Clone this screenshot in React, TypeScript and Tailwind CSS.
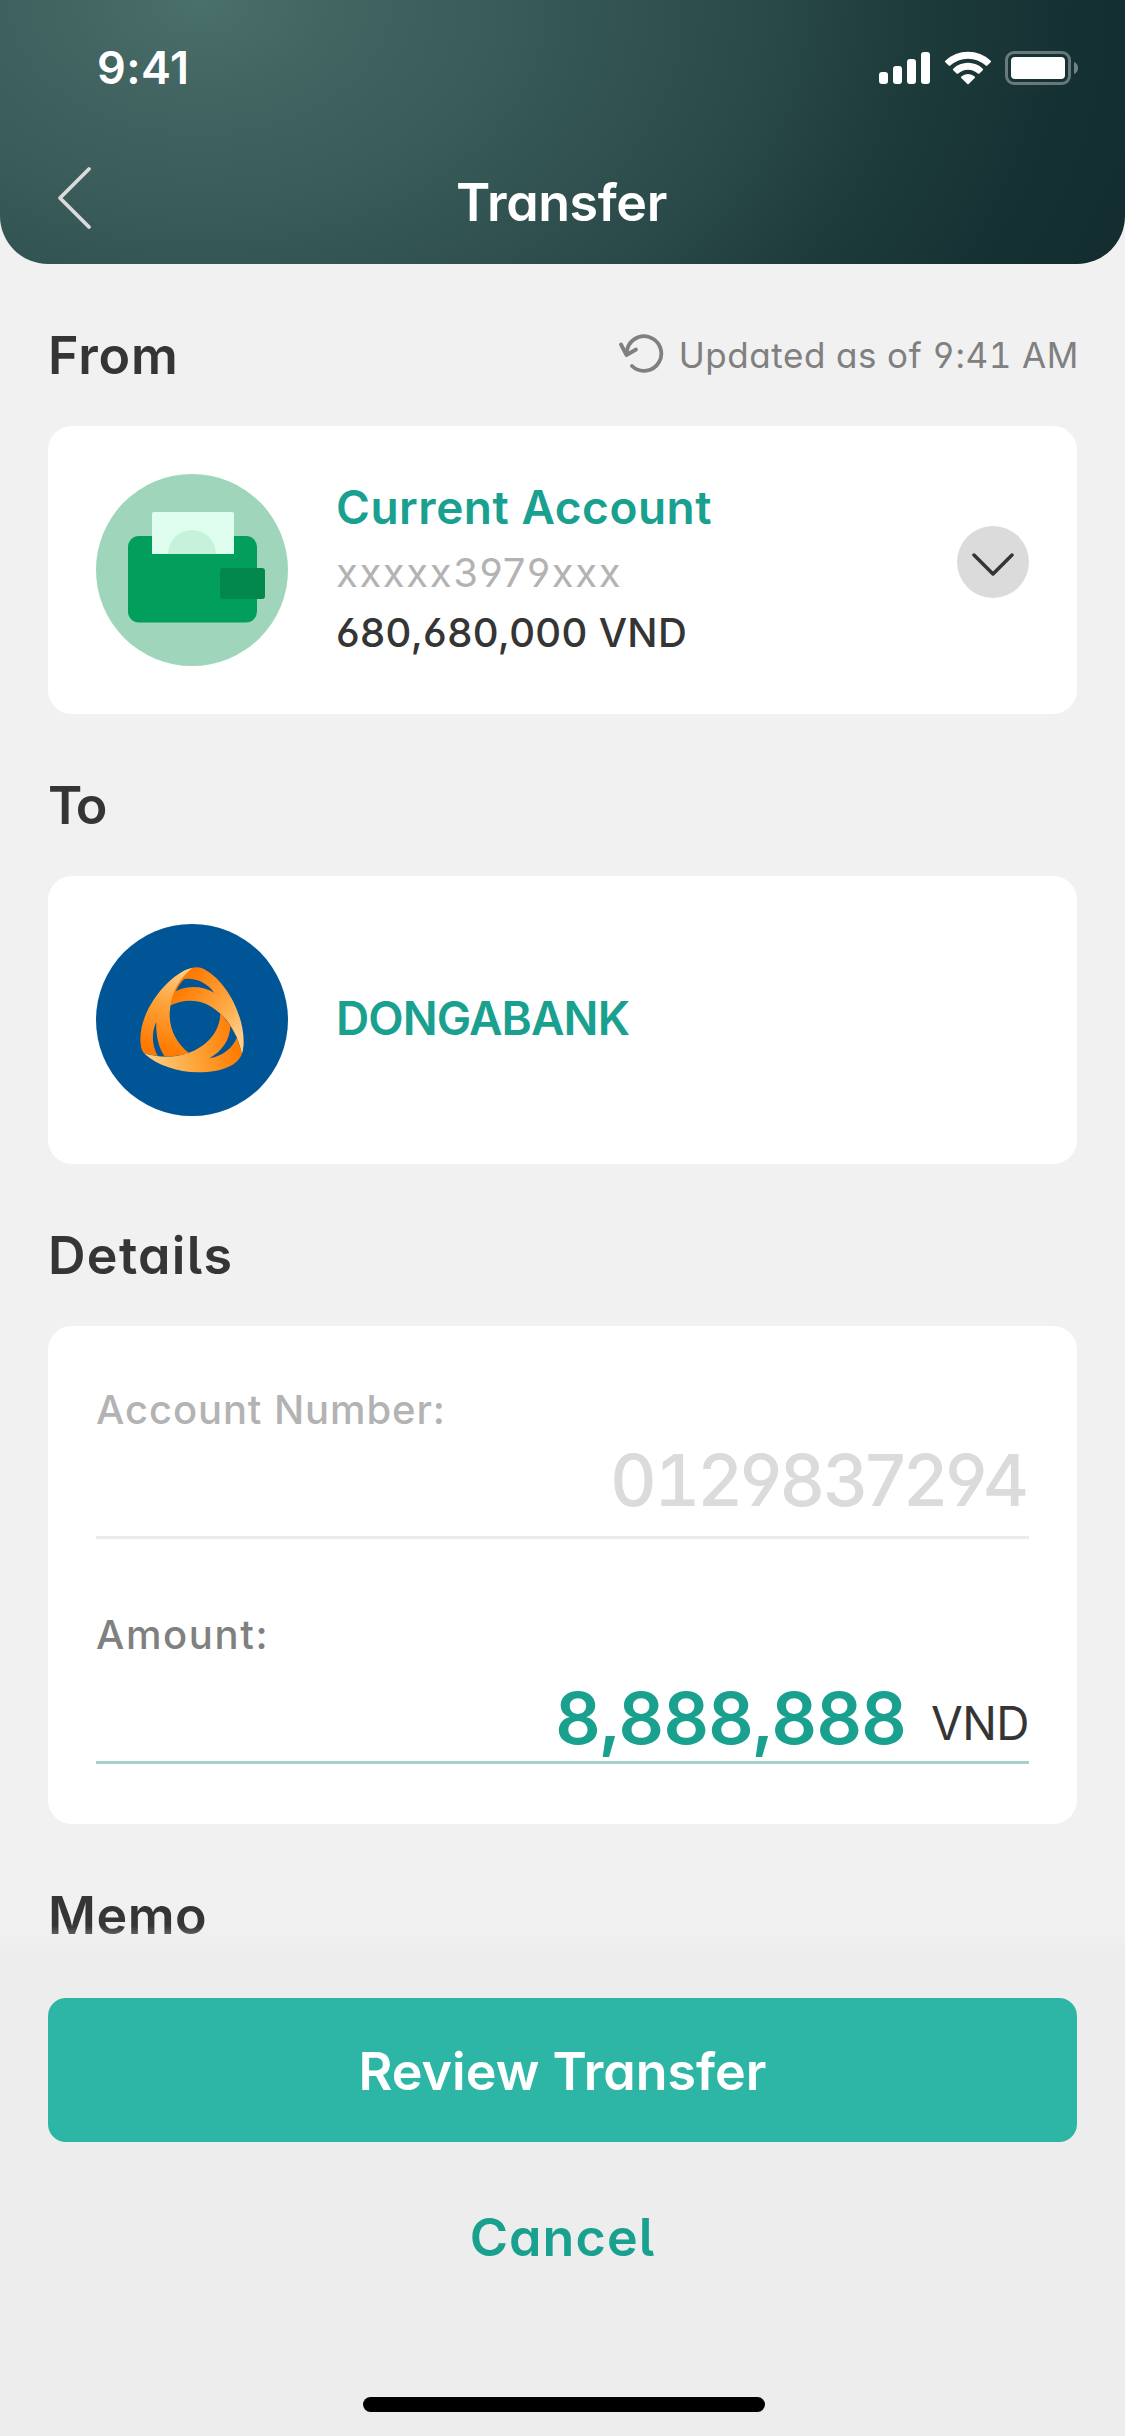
import type { ReactNode } from "react";

function StatusIcons() {
  return (
    <svg width="202" height="40" viewBox="0 0 202 40" fill="#fff">
      {/* cellular */}
      <rect x="1" y="24" width="9" height="12" rx="3" />
      <rect x="15" y="18" width="9" height="18" rx="3" />
      <rect x="29" y="11" width="9" height="25" rx="3" />
      <rect x="43" y="4" width="9" height="32" rx="3" />
      {/* wifi */}
      <path d="M67.300 12.700A33 33 0 0 1 112.700 12.700Q113.500 13.500 112.700 14.300L109.300 17.600Q108.500 18.300 107.700 17.600A26 26 0 0 0 72.300 17.600Q71.500 18.300 70.700 17.600L67.300 14.300Q66.500 13.500 67.300 12.700Z" />
      <path d="M75.200 20.700A21.500 21.500 0 0 1 104.800 20.700Q105.600 21.500 104.800 22.300L101.400 25.500Q100.600 26.200 99.800 25.500A14.500 14.500 0 0 0 80.200 25.500Q79.400 26.200 78.600 25.500L75.200 22.300Q74.400 21.500 75.200 20.700Z" />
      <path d="M83.300 28.500A10 10 0 0 1 96.700 28.500Q97.500 29.300 96.700 30.100L90.700 36Q90 36.600 89.300 36L83.300 30.100Q82.500 29.300 83.300 28.500Z" />
      {/* battery */}
      <rect x="128.500" y="4.500" width="63" height="31" rx="7.500" fill="none" stroke="#fff" strokeOpacity=".35" strokeWidth="3" />
      <path d="M196 14v12a6.500 6.500 0 0 0 0-12z" fillOpacity=".4" />
      <rect x="133" y="9" width="54" height="22" rx="4" />
    </svg>
  );
}

function WalletIcon() {
  return (
    <svg className="size-48 shrink-0" viewBox="0 0 192 192">
      <circle cx="96" cy="96" r="96" fill="#9fd5bb" />
      <rect x="32" y="62" width="129" height="86.500" rx="11" fill="#029e5b" />
      <path d="M56 40a2 2 0 0 1 2-2h78a2 2 0 0 1 2 2v40H56z" fill="#e0feef" />
      <path d="M72 80a24 24 0 1 1 48 0z" fill="#c6f2dc" />
      <rect x="124" y="94" width="45" height="31" rx="3" fill="#02874d" />
    </svg>
  );
}

function DongaLogo() {
  return (
    <svg className="size-48 shrink-0" viewBox="0 0 192 192">
      <defs>
        <linearGradient id="left" gradientUnits="userSpaceOnUse" x1="180" y1="60" x2="105" y2="305">
          <stop offset="0" stopColor="#ffd08a" />
          <stop offset=".45" stopColor="#fda43c" />
          <stop offset="1" stopColor="#ff7a00" />
        </linearGradient>
        <linearGradient id="right" gradientUnits="userSpaceOnUse" x1="160" y1="100" x2="335" y2="250">
          <stop offset="0" stopColor="#ff7a00" />
          <stop offset=".65" stopColor="#fdac4a" />
          <stop offset="1" stopColor="#ffcd86" />
        </linearGradient>
        <linearGradient id="base" gradientUnits="userSpaceOnUse" x1="60" y1="325" x2="325" y2="270">
          <stop offset="0" stopColor="#ffcd80" />
          <stop offset=".45" stopColor="#fda83e" />
          <stop offset="1" stopColor="#ff7a00" />
        </linearGradient>
      </defs>
      <circle cx="96" cy="96" r="96" fill="#005596" />
      <g transform="translate(34 26) scale(.33333)">
        <path fill="url(#left)" d="M190 53C135 58 30 165 31 270C32 288 34 302 43 310C85 323 140 322 177 309C140 280 118 240 119 190C120 140 150 95 190 53Z" />
        <path fill="url(#right)" d="M186 54C195 51 206 51 215 54C285 85 341 190 341 275C341 290 339 300 336 310C325 260 300 215 268 188C240 164 215 152 180 152C160 152 140 157 122 166C128 120 150 85 186 54Z" />
        <path fill="#005596" d="M79 216C65 245 64 285 84 319L105 321C88 297 77 262 79 216Z" />
        <path fill="url(#base)" d="M42 310C90 325 140 322 175 309C230 290 270 245 271 190L301 226L321 263L336 310C325 345 280 367 205 367C140 367 80 345 42 310Z" />
        <path fill="url(#right)" d="M262 183L271 190C300 215 325 260 336 310C340 290 341 275 335 240L290 180Z" />
        <path fill="#005596" d="M163 87C195 82 232 98 252 128C220 108 175 105 137 124C143 110 152 97 163 87Z" />
        <path fill="#005596" d="M301 228C300 270 275 305 238 325C280 318 308 292 321 263Z" />
      </g>
    </svg>
  );
}

function RefreshIcon() {
  return (
    <svg width="46" height="42" viewBox="0 0 46 42" fill="none" stroke="#808080" strokeWidth="3.800" strokeLinecap="round" strokeLinejoin="round">
      <path d="M14 34A17.300 17.300 0 1 0 8.700 20.500" />
      <path d="M3 12.500L8.500 23L18 17.500" />
    </svg>
  );
}

function Heading({ children, className = "", aside }: { children: ReactNode; className?: string; aside?: ReactNode }) {
  return (
    <div className="flex h-[162px] items-center justify-between pt-[22px]">
      <h2 className={`text-[52px] leading-[60px] font-semibold text-[#353535] ${className}`}>{children}</h2>
      {aside}
    </div>
  );
}

export default function App() {
  return (
    <div className="relative h-[2436px] w-[1125px] overflow-hidden bg-[#f1f1f1] font-['Inter',sans-serif] [font-feature-settings:'cv11','cv05','cv03','cv04']">
      <header className="h-[264px] rounded-b-[48px] bg-[radial-gradient(1000px_700px_at_200px_0px,#4a706a_0%,#426562_13%,#3a5c5b_29%,#335553_39%,#2a4a49_56%,#1f3d3d_69%,#163133_86%,#122c2f_100%)] text-white">
        <div className="flex h-[136px] items-center justify-between pr-[45px] pl-[97px]">
          <span className="text-[45px] leading-[54px] font-semibold tracking-[0.42px] [font-feature-settings:normal]">9:41</span>
          <StatusIcons />
        </div>
        <div className="grid h-[128px] grid-cols-[1fr_auto_1fr] items-center pt-[6px]">
          <svg className="-mt-[10px] ml-[54px]" width="40" height="66" viewBox="0 0 40 66" fill="none" stroke="#dbdbdb" strokeWidth="3.800" strokeLinecap="round" strokeLinejoin="round">
            <path d="M35 4L6 33L35 62" />
          </svg>
          <h1 className="-ml-[2px] text-[52px] leading-[60px] font-semibold tracking-[-0.4px]">Transfer</h1>
          <span />
        </div>
      </header>

      <main className="px-12">
        <Heading
          className="tracking-[0.8px]"
          aside={
            <div className="-mr-[2px] -mt-[2px] flex items-center gap-[15px] text-[#808080]">
              <span className="-mt-[4px]"><RefreshIcon /></span>
              <span className="text-[35px] leading-[42px] tracking-[0.59px] [font-feature-settings:'cv11','cv05','cv03','cv04','tnum']">Updated as of 9:41 AM</span>
            </div>
          }
        >
          From
        </Heading>
        <section className="flex h-72 items-center gap-12 rounded-3xl bg-white px-12">
          <WalletIcon />
          <div className="-mt-[5px] flex grow flex-col">
            <span className="text-[46px] leading-[65px] font-semibold tracking-[0.53px] text-[#19a08f]">Current Account</span>
            <span className="text-[40px] leading-[65px] tracking-[1.59px] text-[#b3b3b3]">xxxxx3979xxx</span>
            <span className="text-[40px] leading-[56px] font-medium tracking-[0.34px] text-[#353535]">680,680,000 VND</span>
          </div>
          <button className="-mt-4 flex size-[72px] items-center justify-center rounded-full bg-[#dbdbdb]">
            <svg width="46" height="28" viewBox="0 0 46 28" fill="none" stroke="#353535" strokeWidth="3.500" strokeLinecap="round" strokeLinejoin="round">
              <path d="M4 7L23 26L42 7" />
            </svg>
          </button>
        </section>

        <Heading className="tracking-[-2.6px]">To</Heading>
        <section className="flex h-72 items-center gap-12 rounded-3xl bg-white px-12">
          <DongaLogo />
          <span className="-mt-[5px] text-[46px] leading-[66px] font-semibold tracking-[-0.9px] text-[#19a08f]">DONGABANK</span>
        </section>

        <Heading className="tracking-[1.3px]">Details</Heading>
        <section className="h-[498px] rounded-3xl bg-white px-12 pt-[60px]">
          <div className="h-[153px] border-b-[3px] border-[#ebebeb]">
            <div className="text-[40px] leading-[48px] font-medium tracking-[0.89px] text-[#b3b3b3]">Account Number:</div>
            <div className="pr-[2px] text-right text-[71px] leading-[93px] font-medium tracking-[-2.05px] text-[#dbdbdb]">
              0<span className="[font-feature-settings:'tnum']">1</span>29837294
            </div>
          </div>
          <div className="h-[225px] border-b-[3px] border-[#a7d0cb] pt-[72px]">
            <div className="text-[40px] leading-[48px] font-medium tracking-[1.6px] text-[#808080]">Amount:</div>
            <div className="flex h-[102px] items-center justify-end gap-[25px] pt-[15px]">
              <span className="text-[71px] leading-[86px] font-semibold tracking-[-0.65px] text-[#19a08f]">8,888,888</span>
              <span className="mt-[10px] text-[46px] leading-[56px] tracking-[-0.54px] text-[#353535]">VND</span>
            </div>
          </div>
        </section>

        <Heading className="tracking-[0.5px]">Memo</Heading>
      </main>

      <footer className="absolute inset-x-0 bottom-0 h-[510px]">
        <div className="h-9 bg-linear-to-b from-[#ececec]/0 to-[#ececec]" />
        <div className="flex h-[474px] flex-col bg-[#ededed] px-12 pt-9">
          <button className="h-36 rounded-[18px] bg-[#2db6a5] pt-[3px] text-[52px] leading-[60px] font-semibold text-white">Review Transfer</button>
          <button className="mt-6 h-36 text-[52px] leading-[60px] font-semibold tracking-[1.1px] text-[#19a08f]">Cancel</button>
          <div className="mt-[87px] ml-[315px] h-[15px] w-[402px] rounded-full bg-black" />
        </div>
      </footer>
    </div>
  );
}
